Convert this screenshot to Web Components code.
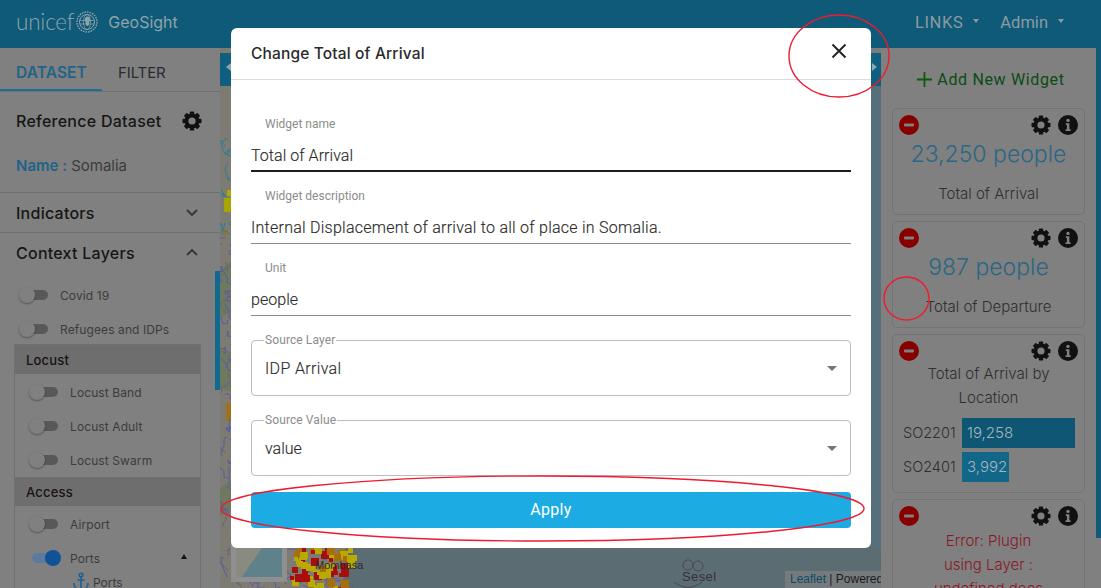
<!DOCTYPE html>
<html lang="en">
<head>
<meta charset="utf-8">
<title>GeoSight</title>
<style>
  html, body { margin: 0; height: 100%; overflow: hidden; background: #808080; }
  body { font-family: "Inter", "Liberation Sans", sans-serif; }
</style>
</head>
<body>
<geo-app></geo-app>
<script>
const GEAR = s => `<svg width="${s}" height="${s}" viewBox="0 0 24 24" aria-hidden="true"><circle cx="12" cy="12" r="6.6" fill="none" stroke="currentColor" stroke-width="4.6"/>${[0,45,90,135,180,225,270,315].map(a => `<rect x="9.4" y="0.6" width="5.2" height="5" rx="1" fill="currentColor" transform="rotate(${a} 12 12)"/>`).join('')}</svg>`;

// small base so every element only has to say its css and html
class Base extends HTMLElement {
    constructor() {
        super();
        this.attachShadow({ mode: 'open' });
    }
    Css() { return ''; }
    Html() { return '<slot></slot>'; }
    connectedCallback() {
        this.shadowRoot.innerHTML = `<style>${this.Css()}</style>${this.Html()}`;
    }
}

class AppHeader extends Base {
    Css() {
        return `
        :host { display: flex; align-items: center; height: 48px; background: #0e5a78; color: #8d9aa2; padding: 0 37px 4px 16px; box-sizing: border-box; }
        .logo { font: 300 22.5px "Lato", sans-serif; letter-spacing: -.2px; color: #8fa3ac; margin-top: -2px; }
        svg.globe { margin-left: 2px; }
        .name { font: 400 16px "Inter", sans-serif; margin-left: 10px; color: #8fa3ac; }
        .space { flex: 1; }
        .link { font: 400 16.5px "Roboto", sans-serif; display: flex; align-items: center; }
        .link i { display: block; margin-left: 10px; margin-top: -3px; border: 3.5px solid transparent; border-top: 4px solid currentColor; border-bottom: 0; }
        .link + .link { margin-left: 21px; }
        `;
    }
    Html() {
        return `
        <span class="logo">unicef</span>
        <svg class="globe" width="22" height="22" viewBox="0 0 22 22" fill="none" stroke="#8fa3ac" aria-hidden="true">
          <circle cx="11" cy="11" r="7.5" stroke-width="1"/>
          <circle cx="11" cy="11" r="10" stroke-width="1.4" stroke-dasharray="1.6 1"/>
          <ellipse cx="11" cy="11" rx="3.6" ry="7.5" stroke-width=".7"/>
          <path d="M3.6 9.5h14.8M3.8 13h14.4" stroke-width=".7"/>
          <path d="M10 6c2-1 4 0 4 2s-1 3-1 5-2 3-3 1 0-3-1-4 0-3 1-4z" fill="#8fa3ac" stroke="none"/>
        </svg>
        <span class="name">GeoSight</span>
        <span class="space"></span>
        <span class="link" style="letter-spacing:.6px">LINKS<i></i></span>
        <span class="link">Admin<i></i></span>
        `;
    }
}

class SideTabs extends Base {
    Css() {
        return `
        :host { display: flex; height: 43px; border-bottom: 1px solid #6f6f6f; font-size: 15px; box-sizing: content-box; }
        span { width: 102px; box-sizing: border-box; padding: 16px 0 0 16px; line-height: 18px; }
        .on { color: #1e6488; font-weight: 600; font-size: 15.5px; border-bottom: 2px solid #1e6e96; height: 43px; letter-spacing: .1px; }
        .off { color: #2a2a36; padding-left: 16px; letter-spacing: -.1px; }
        `;
    }
    Html() {
        return `<span class="on">DATASET</span><span class="off">FILTER</span>`;
    }
}

class SideRow extends Base {
    Css() {
        return `
        :host { display: flex; align-items: center; justify-content: space-between; height: 37px; padding: 1px 21px 1px 16px; border-bottom: 1px solid #6f6f6f; font-size: 16px; font-weight: 500; color: #161616; letter-spacing: .25px; }
        :host([open]) { border-bottom: 0; }
        svg { display: block; }
        `;
    }
    Html() {
        const path = this.hasAttribute('open') ? 'M2 9l5-5 5 5' : 'M2 4l5 5 5-5';
        return `<span><slot></slot></span><svg width="14" height="13" viewBox="0 0 14 13" fill="none" stroke="#333" stroke-width="1.8"><path d="${path}"/></svg>`;
    }
}

class LayerToggle extends Base {
    Css() {
        return `
        :host { display: flex; align-items: center; height: 34px; font-size: 12px; color: #3c3c3c; letter-spacing: .1px; position: relative; }
        .sw { width: 23px; height: 10px; border-radius: 5px; background: #585858; position: relative; margin-right: 12px; flex: none; }
        .sw::after { content: ""; position: absolute; left: -6px; top: -3px; width: 16px; height: 16px; border-radius: 50%; background: #808080; box-shadow: 0 1px 2px rgba(0,0,0,.35); }
        :host([on]) .sw { background: #5a7a9c; width: 26px; margin-left: -3px; }
        :host([on]) .sw::after { left: 13px; background: #0f5296; box-shadow: none; }
        .mark { position: absolute; right: 13px; top: 13px; border: 3px solid transparent; border-bottom: 5px solid #141414; border-top: 0; }
        `;
    }
    Html() {
        return `<span class="sw"></span><slot></slot>${this.hasAttribute('on') ? '<span class="mark"></span>' : ''}`;
    }
}

class LayerGroup extends Base {
    Css() {
        return `
        :host { display: block; }
        h4 { margin: 0; height: 29px; line-height: 31px; padding-left: 11px; background: #6e6e6e; box-shadow: inset 0 1px #707070; font-size: 13px; font-weight: 500; color: #181212; letter-spacing: .2px; }
        .rows { padding: 1px 0 0 20px; }
        `;
    }
    Html() {
        return `<h4>${this.getAttribute('title')}</h4><div class="rows"><slot></slot></div>`;
    }
}

class SidePanel extends Base {
    Css() {
        return `
        :host { display: block; width: 220px; flex: none; background: #808080; position: relative; overflow: hidden; }
        .ref { height: 101px; padding: 19px 16px 0; box-sizing: border-box; border-bottom: 1px solid #6f6f6f; }
        .ref div { display: flex; justify-content: space-between; align-items: center; font-size: 16px; font-weight: 500; color: #161616; height: 20px; padding-right: 2px; letter-spacing: .25px; }
        .ref svg { color: #111; display: block; }
        .ref p { margin: 25px 0 0; font-size: 15px; line-height: 20px; color: #3c3c3c; }
        .ref b { color: #1e6488; font-weight: 600; }
        .layers { padding: 0 19px 0 25px; margin-top: 6px; }
        .box { margin: -2px 0 0 -11px; border: 1px solid #707070; border-bottom: 0; width: 187px; box-sizing: border-box; }
        .sub { display: flex; align-items: center; height: 20px; font-size: 12px; color: #3c3c3c; padding-left: 38px; margin-top: -3px; }
        .sub svg { margin-right: 4px; flex: none; }
        .thumb { position: absolute; right: 0; top: 223px; width: 5px; height: 119px; background: #0f6a8e; }
        `;
    }
    Html() {
        return `
        <side-tabs></side-tabs>
        <div class="ref">
          <div><span>Reference Dataset</span>${GEAR(20)}</div>
          <p><b>Name :</b> Somalia</p>
        </div>
        <side-row>Indicators</side-row>
        <side-row open>Context Layers</side-row>
        <div class="layers">
          <layer-toggle>Covid 19</layer-toggle>
          <layer-toggle>Refugees and IDPs</layer-toggle>
          <div class="box">
            <layer-group title="Locust">
              <layer-toggle>Locust Band</layer-toggle>
              <layer-toggle>Locust Adult</layer-toggle>
              <layer-toggle>Locust Swarm</layer-toggle>
            </layer-group>
            <layer-group title="Access">
              <layer-toggle>Airport</layer-toggle>
              <layer-toggle on>Ports</layer-toggle>
              <div class="sub">
                <svg width="16" height="20" viewBox="0 0 16 20" fill="none" stroke="#1f5f92" stroke-width="1.6"><circle cx="8" cy="3" r="1.8"/><path d="M8 5v13M4.5 8h7M1 11c0 5 3.5 7 7 7s7-2 7-7"/></svg>Ports
              </div>
            </layer-group>
          </div>
        </div>
        <span class="thumb"></span>
        `;
    }
}

class MapView extends Base {
    Css() {
        return `
        :host { display: block; flex: 1; position: relative; overflow: hidden; background: #7d7b72; }
        svg.map { position: absolute; inset: 0; }
        .tab { position: absolute; top: 5px; width: 20px; height: 33px; background: #0e5f80; }
        .tab.l { left: 0; } .tab.r { right: 0; }
        .tab::after { content: ""; position: absolute; top: 10px; border: 4px solid transparent; }
        .tab.l::after { left: 6px; border-right: 5px solid #8aa; border-left: 0; }
        .tab.r::after { right: 4px; border-left: 5px solid #8aa; border-right: 0; }
        .place { position: absolute; font: 11px "Liberation Sans", sans-serif; color: #2a2a2a; }
        .mini { position: absolute; left: 11px; bottom: 6px; width: 56px; height: 50px; border: 5px solid #8f8f8f; box-sizing: border-box; background: linear-gradient(125deg, #8b8a80 45%, #5f8189 46%); }
        .credit { position: absolute; right: 0; bottom: 0; width: 96px; padding-left: 5px; box-sizing: border-box; height: 17px; background: #757a7c; font: 12px/17px "Liberation Sans", sans-serif; color: #1c1c1c; white-space: nowrap; overflow: hidden; }
        .credit a { color: #0d4a66; }
        `;
    }
    Html() {
        // rough map of rivers and heat cells, seeded so it stays the same
        let seed = 17;
        const rnd = n => (seed = (seed * 16807) % 2147483647) % n;
        let rivers = '';
        for (let i = 0; i < 70; i++) {
            const y = 90 + rnd(450);
            let x = rnd(16), d = `M${x} ${y}`, py = y;
            for (let k = 0; k < 5; k++) { x += rnd(9) - 3; py += rnd(12) - 4; d += `L${x} ${py}`; }
            const col = y < 180 ? '#2a7f98' : (i % 3 ? '#5a5aa6' : '#6c6470');
            rivers += `<path d="${d}" stroke="${col}"/>`;
        }
        for (let i = 0; i < 24; i++) {
            let x = rnd(126), py = 500 + rnd(40), d = `M${x} ${py}`;
            for (let k = 0; k < 4; k++) { x += rnd(12) - 4; py += rnd(10) - 2; d += `L${x} ${py}`; }
            rivers += `<path d="${d}" stroke="#5a5aa6"/>`;
        }
        let heat = '';
        const cols = ['#b8aa00', '#b8aa00', '#a86e08', '#a80e0e'];
        for (let i = 0; i < 75; i++) {
            const x = 68 + rnd(66), y = 498 + rnd(42);
            if (x + (y - 500) * .45 > 136) continue;
            const s = 4 + rnd(5);
            heat += `<rect x="${x}" y="${y}" width="${s}" height="${s}" fill="${cols[rnd(4)]}"/>`;
        }
        return `
        <svg class="map" width="661" height="540" viewBox="0 0 661 540" aria-hidden="true">
          <rect x="125" y="498" width="536" height="42" fill="#5b6c72"/>
          <path d="M125 540L135 498H140L118 540z" fill="#5b6c72"/>
          <rect x="651" y="0" width="10" height="500" fill="#55707a"/>
          <rect x="651" y="0" width="10" height="5" fill="#7b7b7b"/>
          <path d="M0 220l11-6v50l-11 6zM0 300l11 4v40l-11-4zM0 440l11-8v30l-11 6z" fill="#6e7a60"/>
          <rect x="4" y="150" width="7" height="14" fill="#a8a400"/><rect x="7" y="142" width="4" height="8" fill="#b0aa00"/>
          <rect x="8" y="30" width="3" height="4" fill="#b0aa00"/><rect x="6" y="355" width="5" height="18" fill="#a0701a"/>
          <rect x="3" y="183" width="4" height="4" fill="#a0701a"/>
          <g fill="none" stroke-width="1">${rivers}</g>
          ${heat}
          <g fill="none" stroke="#4a4654" stroke-width="1"><circle cx="468" cy="517" r="5"/><circle cx="478" cy="518" r="5"/><path d="M454 534c8 6 18 8 28 0"/></g>
        </svg>
        <span class="tab l"></span><span class="tab r"></span>
        <span class="mini"></span>
        <span class="place" style="left:95px;bottom:17px">Mombasa</span>
        <span class="place" style="left:462px;bottom:4px;font-size:13px;letter-spacing:.4px;color:#38303a">Sesel</span>
        <span class="credit"><a>Leaflet</a> | Powered</span>
        `;
    }
}

class WidgetCard extends Base {
    Css() {
        return `
        :host { display: block; border: 1px solid #737373; border-radius: 5px; padding: 6px 6px 8px 6px; margin-bottom: 6px; text-align: center; color: #333; overflow: hidden; }
        .tools { display: flex; align-items: center; height: 20px; color: #111; }
        .space { flex: 1; }
        .tools svg { display: block; }
        .tools .gear { margin-right: 7px; }
        `;
    }
    Html() {
        return `
        <div class="tools">
          <svg width="20" height="20" viewBox="0 0 20 20"><circle cx="10" cy="10" r="10" fill="#860000"/><rect x="5" y="8.6" width="10" height="2.8" rx=".8" fill="#808080"/></svg>
          <span class="space"></span>
          <span class="gear">${GEAR(20)}</span>
          <svg width="20" height="20" viewBox="0 0 20 20"><circle cx="10" cy="10" r="10" fill="#111"/><circle cx="10" cy="5.4" r="1.7" fill="#808080"/><path d="M7.8 8.2h3.6v6h1.2v1.7H7.6v-1.7h1.3V9.9H7.8z" fill="#808080"/></svg>
        </div>
        <slot></slot>
        `;
    }
}

class WidgetValue extends Base {
    Css() {
        return `
        :host { display: block; }
        .num { font-size: 23px; font-weight: 300; line-height: 34px; color: #2b6785; margin-top: 2px; white-space: nowrap; }
        .cap { font-size: 15px; font-weight: 300; line-height: 24px; color: #2f2f2f; margin-top: 11px; }
        `;
    }
    Html() {
        return `<div class="num">${this.getAttribute('value')}</div><div class="cap">${this.getAttribute('caption')}</div>`;
    }
}

class WidgetBars extends Base {
    Css() {
        return `
        :host { display: block; font-size: 15px; font-weight: 300; color: #2f2f2f; line-height: 24px; padding-bottom: 2px; }
        .cap { padding: 0 25px; margin-top: 1px; }
        .row { display: flex; align-items: center; height: 30px; margin: 4px 3px 0 4px; text-align: left; }
        .row.first { margin-top: 8px; }
        .id { width: 59px; flex: none; font-size: 14.5px; }
        .bar { height: 30px; line-height: 30px; padding-left: 5px; box-sizing: border-box; background: #0e5674; color: #a6b4ba; }
        .bar.b { background: #126688; }
        `;
    }
    Html() {
        return `
        <div class="cap">Total of Arrival by Location</div>
        <div class="row first"><span class="id">SO2201</span><span class="bar" style="width:113px">19,258</span></div>
        <div class="row"><span class="id">SO2401</span><span class="bar b" style="width:47px">3,992</span></div>
        `;
    }
}

class WidgetPanel extends Base {
    Css() {
        return `
        :host { display: block; width: 215px; flex: none; background: #808080; padding: 0 11px 0 11px; box-sizing: border-box; overflow: hidden; }
        .add { display: flex; align-items: center; justify-content: center; height: 60px; box-sizing: border-box; padding: 2px 0 0 5px; font-size: 16px; color: #0a4c16; font-family: "Roboto", sans-serif; letter-spacing: .65px; }
        .add svg { margin-right: 5px; }
        .err { color: #8a1626; font-size: 15px; font-weight: 300; line-height: 24px; padding: 3px 10px 0; }
        `;
    }
    Html() {
        return `
        <div class="add"><svg width="15" height="15" viewBox="0 0 15 15" fill="none" stroke="#0a5a0a" stroke-width="1.8"><path d="M7.5 0v15M0 7.5h15"/></svg>Add New Widget</div>
        <widget-card><widget-value value="23,250 people" caption="Total of Arrival"></widget-value></widget-card>
        <widget-card><widget-value value="987 people" caption="Total of Departure"></widget-value></widget-card>
        <widget-card><widget-bars></widget-bars></widget-card>
        <widget-card><div class="err">Error: Plugin<br>using Layer :<br>undefined does</div></widget-card>
        `;
    }
}

class TextField extends Base {
    Css() {
        return `
        :host { display: block; height: 56px; box-sizing: border-box; border-bottom: 1px solid #8a8a8a; font-family: "Roboto", sans-serif; letter-spacing: .05px; }
        :host([focused]) { border-bottom: 2px solid #1c1c1c; }
        label { display: block; font-size: 12px; line-height: 16px; padding-left: 14px; color: #8c8c8c; letter-spacing: 0; }
        div { margin-top: 12px; font-size: 16px; line-height: 24px; color: #2b2b2b; font-weight: 300; -webkit-text-stroke: .15px #2b2b2b; white-space: nowrap; }
        `;
    }
    Html() {
        return `<label>${this.getAttribute('label')}</label><div><slot></slot></div>`;
    }
}

class SelectField extends Base {
    Css() {
        return `
        :host { display: flex; align-items: center; justify-content: space-between; height: 56px; margin-top: 8px; box-sizing: border-box; border: 1px solid #bdbdbd; border-radius: 4px; padding: 0 13px; position: relative; font-family: "Roboto", sans-serif; }
        label { position: absolute; left: 12px; top: -8px; font-size: 12px; line-height: 14px; padding: 0 1px; background: #fff; color: #8c8c8c; letter-spacing: .1px; }
        div { font-size: 16px; color: #2b2b2b; font-weight: 300; -webkit-text-stroke: .15px #2b2b2b; }
        i { display: block; border: 5px solid transparent; border-top: 5px solid #757575; border-bottom: 0; }
        `;
    }
    Html() {
        return `<label>${this.getAttribute('label')}</label><div><slot></slot></div><i></i>`;
    }
}

class ChangeDialog extends Base {
    Css() {
        return `
        :host { position: absolute; left: 231px; top: 28px; width: 640px; height: 520px; background: #fff; border-radius: 6px; display: flex; flex-direction: column; }
        header { display: flex; align-items: center; justify-content: space-between; height: 51px; flex: none; border-bottom: 1px solid #dcdcdc; padding: 0 24px 0 20px; font-size: 15.5px; font-weight: 500; color: #2a2a2a; letter-spacing: .15px; }
        header svg { margin-top: -5px; display: block; }
        .body { display: flex; flex-direction: column; gap: 16px; padding: 36px 20px 20px; }
        button { height: 36px; border: 0; border-radius: 4px; background: #1cabe2; color: #fff; font: 400 16px "Roboto", sans-serif; letter-spacing: .3px; padding: 0 0 2px; }
        `;
    }
    Html() {
        return `
        <header>
          <span>Change Total of Arrival</span>
          <svg width="16" height="16" viewBox="0 0 16 16" stroke="#222" stroke-width="1.9" fill="none"><path d="M1.5 1.5l13 13M14.5 1.5l-13 13"/></svg>
        </header>
        <div class="body">
          <text-field label="Widget name" focused>Total of Arrival</text-field>
          <text-field label="Widget description" style="letter-spacing:.25px">Internal Displacement of arrival to all of place in Somalia.</text-field>
          <text-field label="Unit">people</text-field>
          <select-field label="Source Layer" style="letter-spacing:.35px">IDP Arrival</select-field>
          <select-field label="Source Value">value</select-field>
          <button>Apply</button>
        </div>
        `;
    }
}

// red hand drawn marks that lie over the screenshot
class RedMarks extends Base {
    Css() {
        return `:host { position: absolute; inset: 0; pointer-events: none; display: block; }`;
    }
    Html() {
        return `
        <svg width="1101" height="588" fill="none" stroke="#ee1c2e" stroke-width="1.4" aria-hidden="true">
          <ellipse cx="839" cy="56" rx="50" ry="41"/>
          <ellipse cx="906.5" cy="298.5" rx="22.5" ry="21.5"/>
          <ellipse cx="542.5" cy="508.5" rx="321.5" ry="32.5"/>
        </svg>
        `;
    }
}

class GeoApp extends Base {
    Css() {
        return `
        :host { display: block; position: relative; width: 1101px; height: 588px; overflow: hidden; }
        main { display: flex; height: 540px; }
        .edge { width: 5px; height: 490px; background: #0e5a78; flex: none; }
        `;
    }
    Html() {
        return `
        <app-header></app-header>
        <main>
          <side-panel></side-panel>
          <map-view></map-view>
          <widget-panel></widget-panel>
          <div class="edge"></div>
        </main>
        <change-dialog></change-dialog>
        <red-marks></red-marks>
        `;
    }
}

window.customElements.define('app-header', AppHeader);
window.customElements.define('side-tabs', SideTabs);
window.customElements.define('side-row', SideRow);
window.customElements.define('layer-toggle', LayerToggle);
window.customElements.define('layer-group', LayerGroup);
window.customElements.define('side-panel', SidePanel);
window.customElements.define('map-view', MapView);
window.customElements.define('widget-card', WidgetCard);
window.customElements.define('widget-value', WidgetValue);
window.customElements.define('widget-bars', WidgetBars);
window.customElements.define('widget-panel', WidgetPanel);
window.customElements.define('text-field', TextField);
window.customElements.define('select-field', SelectField);
window.customElements.define('change-dialog', ChangeDialog);
window.customElements.define('red-marks', RedMarks);
window.customElements.define('geo-app', GeoApp);
</script>
</body>
</html>
